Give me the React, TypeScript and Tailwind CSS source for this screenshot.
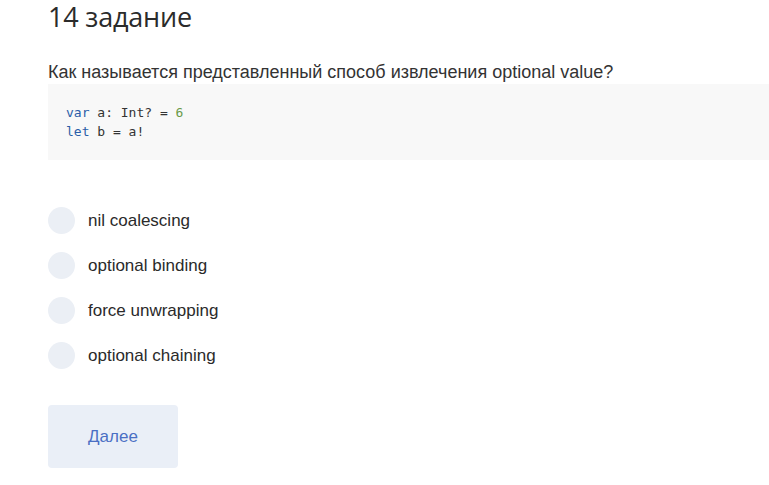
import React, { useState } from 'react';

const options = ['nil coalescing', 'optional binding', 'force unwrapping', 'optional chaining'];

export default function App() {
  const [picked, setPicked] = useState<number | null>(null);

  return (
    <div className="w-[769px] h-[485px] overflow-hidden bg-white pl-12 pt-[1px] text-[#333] font-['Liberation_Sans',Arial,sans-serif]">
      {/* Title */}
      <h1 className="text-[27px] leading-[32px] text-[#2b2b2b] font-['Open_Sans',sans-serif] tracking-[-0.2px]">
        14 задание
      </h1>

      {/* Question */}
      <p className="mt-[28px] text-[18px] leading-[22px] text-[#333]">
        Как называется представленный способ извлечения optional value?
      </p>

      {/* Code block */}
      <pre className="mt-[1px] h-[76px] bg-[#f8f8f8] pl-[18px] pt-[19px] text-[13px] leading-[19px] font-['DejaVu_Sans_Mono','Liberation_Mono',monospace] text-[#333]">
        <span className="text-[#2b5ea8]">var</span> a: Int? = <span className="text-[#6a9a4a]">6</span>
        {'\n'}
        <span className="text-[#2b5ea8]">let</span> b = a!
      </pre>

      {/* Options */}
      <div className="mt-[47px] flex flex-col gap-[18px]">
        {options.map((o, i) => (
          <label key={o} className="flex items-center gap-[13px] cursor-pointer" onClick={() => setPicked(i)}>
            <span className="w-[27px] h-[27px] rounded-full bg-[#ebeff5] flex items-center justify-center">
              {picked === i && <span className="w-[11px] h-[11px] rounded-full bg-[#4a6fc4]" />}
            </span>
            <span className="text-[17px] leading-[20px] text-[#2a2a2a]">{o}</span>
          </label>
        ))}
      </div>

      {/* Next button */}
      <button className="mt-[36px] w-[130px] h-[63px] rounded-[4px] bg-[#eaeff7] text-[17px] text-[#4a6fc4]">
        Далее
      </button>
    </div>
  );
}
